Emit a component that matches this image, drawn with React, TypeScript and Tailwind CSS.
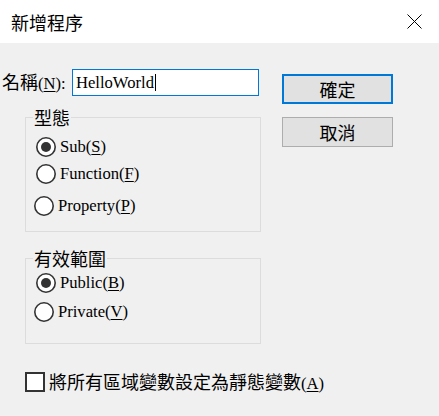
import React from "react";

const cjk = "text-[18px] [font-family:'Noto_Sans_CJK_TC',sans-serif]";

function Cjk({ children }: { children: React.ReactNode }) {
  return <span className={cjk}>{children}</span>;
}

function Radio({ checked }: { checked?: boolean }) {
  return (
    <svg width="20" height="20" viewBox="0 0 20 20" className="shrink-0">
      <circle cx="10" cy="10" r="9.2" fill="#fff" stroke="#333" strokeWidth="1.6" />
      {checked && <circle cx="10" cy="10" r="5" fill="#333" />}
    </svg>
  );
}

function RadioRow({
  checked,
  label,
  mnemonic,
  className,
}: {
  checked?: boolean;
  label: string;
  mnemonic: string;
  className?: string;
}) {
  return (
    <div className={`flex h-[20px] items-center gap-[4px] ${className ?? ""}`}>
      <Radio checked={checked} />
      <span className="leading-[20px]">
        {label}(<span className="underline underline-offset-2">{mnemonic}</span>)
      </span>
    </div>
  );
}

export default function App() {
  return (
    <div className="w-[439px] h-[416px] bg-[#f0f0f0] flex flex-col text-black text-[16.6px] leading-[20px] [font-family:'Liberation_Serif','Noto_Sans_CJK_TC',serif]">
      {/* title bar */}
      <div className="h-[43px] bg-white flex items-center justify-between pl-[11px] pr-[17px]">
        <span className="text-[18px] leading-[22px] [font-family:'Noto_Sans_CJK_TC',sans-serif]">新增程序</span>
        <svg width="15" height="15" viewBox="0 0 15 15">
          <path d="M0.5 0.5 L14.5 14.5 M14.5 0.5 L0.5 14.5" stroke="#000" strokeWidth="1" />
        </svg>
      </div>

      <div className="flex">
        {/* left column */}
        <div className="w-[282px] pl-[2px] pt-[26px] flex flex-col">
          <div className="flex items-center h-[27px]">
            <span className="w-[70px] whitespace-nowrap">
              <Cjk>名稱</Cjk>(<span className="underline underline-offset-2">N</span>):
            </span>
            <div className="w-[187px] h-[27px] bg-white border border-[#0078d7] flex items-center pl-[3px]">
              <span>HelloWorld</span>
              <span className="ml-px w-px h-[17px] bg-black" />
            </div>
          </div>

          <fieldset className="ml-[23px] mt-[11px] w-[236px] h-[125px] border border-[#dcdcdc]">
            <legend className="ml-[7px] px-[1px] h-[20px] text-[18px] leading-[20px] [font-family:'Noto_Sans_CJK_TC',sans-serif]">
              型態
            </legend>
            <div className="flex flex-col pt-[10px]">
              <RadioRow checked label="Sub" mnemonic="S" className="pl-[10px]" />
              <RadioRow label="Function" mnemonic="F" className="pl-[10px] mt-[7px]" />
              <RadioRow label="Property" mnemonic="P" className="pl-[8px] mt-[12px]" />
            </div>
          </fieldset>

          <fieldset className="ml-[23px] mt-[16px] w-[236px] h-[96px] border border-[#dcdcdc]">
            <legend className="ml-[7px] px-[1px] h-[20px] text-[18px] leading-[20px] [font-family:'Noto_Sans_CJK_TC',sans-serif]">
              有效範圍
            </legend>
            <div className="flex flex-col pt-[5px]">
              <RadioRow checked label="Public" mnemonic="B" className="pl-[10px]" />
              <RadioRow label="Private" mnemonic="V" className="pl-[8px] mt-[9px]" />
            </div>
          </fieldset>
        </div>

        {/* buttons */}
        <div className="pt-[31px] flex flex-col gap-[13px]">
          <button className="w-[111px] h-[30px] bg-[#e1e1e1] border-2 border-[#0078d7] flex items-center justify-center">
            <Cjk>確定</Cjk>
          </button>
          <button className="w-[111px] h-[30px] bg-[#e1e1e1] border border-[#adadad] flex items-center justify-center">
            <Cjk>取消</Cjk>
          </button>
        </div>
      </div>

      {/* static variables option */}
      <div className="mt-[28px] pl-[25px] flex items-center gap-[4px] h-[20px]">
        <div className="w-[20px] h-[20px] bg-white border-2 border-[#333] shrink-0" />
        <span className="whitespace-nowrap">
          <Cjk>將所有區域變數設定為靜態變數</Cjk>(<span className="underline underline-offset-2">A</span>)
        </span>
      </div>
    </div>
  );
}
